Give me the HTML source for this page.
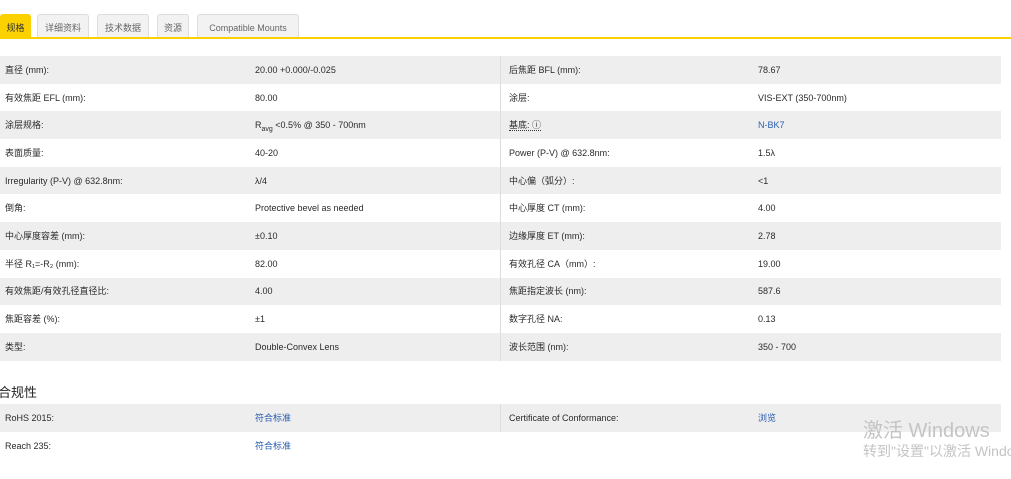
<!DOCTYPE html>
<html><head><meta charset="utf-8"><style>
body{margin:0;width:1011px;height:479px;overflow:hidden;background:#fff;font-family:"Liberation Sans","Noto Sans CJK SC",sans-serif;font-size:9px;color:#2a2a2a;position:relative}
.tab{position:absolute;top:14px;height:24px;line-height:26px;background:#f2f2f2;border:1px solid #ddd;border-bottom:none;border-radius:3px 3px 0 0;box-sizing:border-box;text-align:center;color:#666;font-size:9px}
.tab.a{background:#fbd100;border-color:#fbd100;color:#333}
.line{position:absolute;left:0;top:37px;width:1011px;height:2px;background:#fbd100}
table{position:absolute;left:0;border-collapse:collapse;width:1001px}
td{height:27.7px;padding:0;vertical-align:middle;line-height:12px}
tr.g td{background:#eeeeee}
td.l{padding-left:5px;width:250px}
td.v{width:245px;border-right:1px solid #ddd}
td.l2{padding-left:8px;width:249px}
a{color:#2a5db0;text-decoration:none}
sub{font-size:7px;line-height:0}
.wm{position:absolute;color:#c4c4c4;white-space:nowrap}
</style></head><body>
<div class="tab a" style="left:0;width:31px">规格</div>
<div class="tab" style="left:37px;width:52px">详细资料</div>
<div class="tab" style="left:97px;width:52px">技术数据</div>
<div class="tab" style="left:157px;width:32px">资源</div>
<div class="tab" style="left:197px;width:102px">Compatible Mounts</div>
<div class="line"></div>
<table style="top:56px">
<tr class="g"><td class="l">直径 (mm):</td><td class="v">20.00 +0.000/-0.025</td><td class="l2">后焦距 BFL (mm):</td><td>78.67</td></tr>
<tr><td class="l">有效焦距 EFL (mm):</td><td class="v">80.00</td><td class="l2">涂层:</td><td>VIS-EXT (350-700nm)</td></tr>
<tr class="g"><td class="l">涂层规格:</td><td class="v">R<sub>avg</sub> &lt;0.5% @ 350 - 700nm</td><td class="l2"><span style="border-bottom:1px dotted #333">基底: ⓘ</span></td><td><a>N-BK7</a></td></tr>
<tr><td class="l">表面质量:</td><td class="v">40-20</td><td class="l2">Power (P-V) @ 632.8nm:</td><td>1.5λ</td></tr>
<tr class="g"><td class="l">Irregularity (P-V) @ 632.8nm:</td><td class="v">λ/4</td><td class="l2">中心偏（弧分）:</td><td>&lt;1</td></tr>
<tr><td class="l">倒角:</td><td class="v">Protective bevel as needed</td><td class="l2">中心厚度 CT (mm):</td><td>4.00</td></tr>
<tr class="g"><td class="l">中心厚度容差 (mm):</td><td class="v">±0.10</td><td class="l2">边缘厚度 ET (mm):</td><td>2.78</td></tr>
<tr><td class="l">半径 R₁=-R₂ (mm):</td><td class="v">82.00</td><td class="l2">有效孔径 CA（mm）:</td><td>19.00</td></tr>
<tr class="g"><td class="l">有效焦距/有效孔径直径比:</td><td class="v">4.00</td><td class="l2">焦距指定波长 (nm):</td><td>587.6</td></tr>
<tr><td class="l">焦距容差 (%):</td><td class="v">±1</td><td class="l2">数字孔径 NA:</td><td>0.13</td></tr>
<tr class="g"><td class="l">类型:</td><td class="v">Double-Convex Lens</td><td class="l2">波长范围 (nm):</td><td>350 - 700</td></tr>
</table>
<div style="position:absolute;left:-2px;top:382px;font-size:13px;color:#222">合规性</div>
<table style="top:404px">
<tr class="g"><td class="l">RoHS 2015:</td><td class="v"><a>符合标准</a></td><td class="l2">Certificate of Conformance:</td><td><a>浏览</a></td></tr>
<tr><td class="l">Reach 235:</td><td class="v" style="border-right:none"><a>符合标准</a></td><td class="l2"></td><td></td></tr>
</table>
<div class="wm" style="left:863px;top:414px;font-size:20px">激活 Windows</div>
<div class="wm" style="left:863px;top:441px;font-size:14px">转到"设置"以激活 Windows。</div>
</body></html>
